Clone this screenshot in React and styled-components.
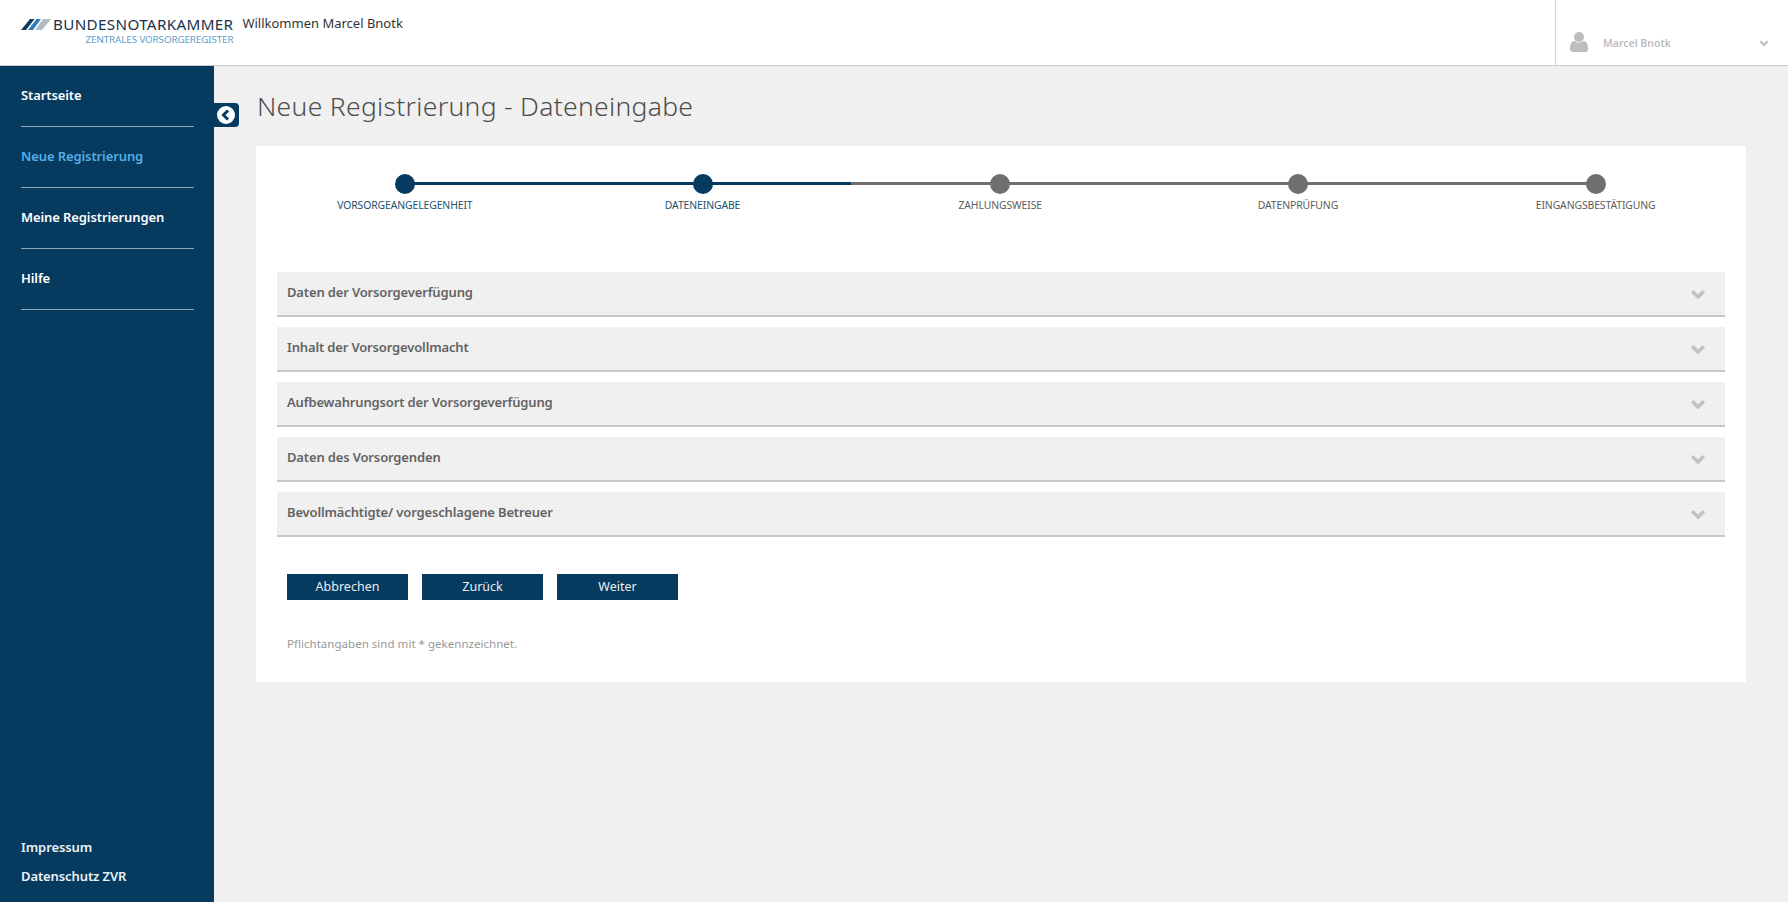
import styled, { createGlobalStyle } from 'styled-components';

const navy = '#063a5e';
const font = '"Noto Sans", "Open Sans", sans-serif';

const GlobalStyle = createGlobalStyle`
html, body {
  margin: 0;
  padding: 0;
  height: 100%;
  background: #f0f0f0;
  font-family: ${font};
}
* { box-sizing: border-box; }
`

const Page = styled.div`
display: flex;
flex-direction: column;
height: 902px;
overflow: hidden;
`

const Header = styled.header`
display: flex;
align-items: stretch;
height: 66px;
flex: none;
background: #fff;
border-bottom: 1px solid #c9c9c9;
`

const Brand = styled.div`
display: flex;
flex-direction: column;
align-items: flex-end;
padding: 14px 0 0 21px;
`

const BrandTop = styled.div`
display: flex;
align-items: center;
gap: 2px;
height: 20px;
`

const BrandName = styled.span`
font-size: 15.2px;
color: #17324d;
letter-spacing: 0.35px;
white-space: nowrap;
`

const BrandSub = styled.span`
font-size: 9.8px;
line-height: 11px;
color: #5f9dc9;
white-space: nowrap;
letter-spacing: -0.1px;
`

const Welcome = styled.div`
margin: 14px 0 0 9px;
font-size: 13px;
line-height: 19px;
color: #333;
white-space: nowrap;
`

const UserBox = styled.div`
display: flex;
align-items: center;
margin-left: auto;
width: 233px;
padding: 19px 19px 0 14px;
border-left: 1px solid #d5d5d5;
`

const UserName = styled.span`
margin: 2px 0 0 15px;
font-size: 10.5px;
font-weight: 600;
color: #bdbdbd;
white-space: nowrap;
`

const UserCaret = styled.span`
display: flex;
margin: 3px 0 0 auto;
`

const Body = styled.div`
display: flex;
flex: 1;
min-height: 0;
`

const Sidebar = styled.nav`
position: relative;
display: flex;
flex-direction: column;
justify-content: space-between;
flex: none;
width: 214px;
padding: 0 20px 0 21px;
background: ${navy};
`

const NavItem = styled.a`
display: block;
height: 61px;
padding-top: 18px;
border-bottom: 1px solid #8ea7b9;
font-size: 13px;
line-height: 22px;
font-weight: 600;
letter-spacing: -0.1px;
color: ${p => (p.$active ? '#55aee6' : '#fff')};
`

const FootLinks = styled.div`
display: flex;
flex-direction: column;
gap: 7px;
padding-bottom: 15px;
`

const FootLink = styled.a`
font-size: 13px;
line-height: 22px;
font-weight: 600;
letter-spacing: -0.1px;
color: #e8f2f8;
`

const Toggle = styled.button`
position: absolute;
top: 37px;
left: 214px;
display: flex;
align-items: center;
justify-content: center;
width: 25px;
height: 24px;
padding: 0 1px 0 0;
border: 0;
border-radius: 0 4px 4px 0;
background: ${navy};
`

const Main = styled.main`
flex: 1;
min-width: 0;
padding: 0 42px 0 42px;
`

const Title = styled.h1`
margin: 0;
padding: 22px 0 0 1px;
height: 80px;
font-size: 26.5px;
line-height: 36px;
font-weight: 300;
letter-spacing: 0.3px;
color: #4d4d4d;
`

const Card = styled.section`
height: 536px;
background: #fff;
padding-top: 28px;
`

const Stepper = styled.div`
display: grid;
grid-template-columns: repeat(5, 1fr);
height: 98px;
padding-right: 1.500px;
`

const Step = styled.div`
position: relative;
display: flex;
flex-direction: column;
align-items: center;
height: 40px;

&::before, &::after {
  content: '';
  position: absolute;
  top: 8px;
  height: 3px;
  width: 50%;
}
&::before {
  left: 0;
  display: ${p => (p.$first ? 'none' : 'block')};
  background: ${p => (p.$done ? navy : '#6f6f6f')};
}
&::after {
  right: 0;
  display: ${p => (p.$last ? 'none' : 'block')};
  background: ${p => (p.$done ? navy : '#6f6f6f')};
}
`

const Dot = styled.span`
position: relative;
z-index: 1;
width: 20px;
height: 20px;
border-radius: 50%;
background: ${p => (p.$done ? navy : '#6f6f6f')};
`

const StepLabel = styled.span`
margin-top: 2px;
font-size: 10.4px;
line-height: 18px;
letter-spacing: -0.1px;
white-space: nowrap;
color: ${p => (p.$done ? '#21506d' : '#5c5c5c')};
`

const Accordion = styled.div`
display: flex;
flex-direction: column;
gap: 10px;
margin: 0 21px 0 21px;
`

const Panel = styled.div`
display: flex;
align-items: center;
justify-content: space-between;
height: 45px;
padding: 0 19px 3px 10px;
background: #f0f0f0;
border-bottom: 2px solid #c8c8c8;
font-size: 13px;
font-weight: 600;
letter-spacing: -0.15px;
color: #636363;
`

const PanelCaret = styled.span`
display: flex;
margin-top: 4px;
`

const Actions = styled.div`
display: flex;
gap: 14px;
margin: 37px 0 0 31px;
`

const Button = styled.button`
width: 121px;
height: 26px;
padding: 0 0 2px;
border: 0;
background: ${navy};
color: #e6eef3;
font-family: ${font};
font-size: 12.5px;
`

const Note = styled.p`
margin: 35px 0 0 31px;
font-size: 11.5px;
line-height: 18px;
letter-spacing: 0.03px;
color: #999;
`

function Chevron({ size = 16, color = '#c2c2c2' }) {
  return (
    <svg width={size} height={size * 0.68} viewBox="0 0 22 15" fill="none">
      <path d="M3 3l8 8 8-8" stroke={color} strokeWidth="5" />
    </svg>
  );
}

function Logo() {
  return (
    <svg width="30" height="11" viewBox="0 0 30 11">
      <path d="M0 11L9 0h4.500L5 11z" fill="#10395f" />
      <path d="M7 11L15.500 0H20l-8 11z" fill="#2e7fb9" />
      <path d="M14 11L22 0h8l-9 11z" fill="#b3bcc3" />
    </svg>
  );
}

function UserIcon() {
  return (
    <svg width="18" height="20" viewBox="0 0 18 20" fill="#bdbdbd">
      <circle cx="9" cy="5" r="5" />
      <path d="M0 17c0-6 2-8 5-8 1 1 2.500 1.500 4 1.500s3-.5 4-1.500c3 0 5 2 5 8 0 2-1 3-3 3H3c-2 0-3-1-3-3z" />
    </svg>
  );
}

function ToggleIcon() {
  return (
    <svg width="18" height="18" viewBox="0 0 18 18">
      <circle cx="9" cy="9" r="9" fill="#fff" />
      <path d="M11 4.500L6.500 9l4.500 4.500" fill="none" stroke={navy} strokeWidth="3" />
    </svg>
  );
}

const navItems = ['Startseite', 'Neue Registrierung', 'Meine Registrierungen', 'Hilfe'];
const steps = [
  { label: 'VORSORGEANGELEGENHEIT', done: true },
  { label: 'DATENEINGABE', done: true },
  { label: 'ZAHLUNGSWEISE' },
  { label: 'DATENPRÜFUNG' },
  { label: 'EINGANGSBESTÄTIGUNG' },
];
const panels = [
  'Daten der Vorsorgeverfügung',
  'Inhalt der Vorsorgevollmacht',
  'Aufbewahrungsort der Vorsorgeverfügung',
  'Daten des Vorsorgenden',
  'Bevollmächtigte/ vorgeschlagene Betreuer',
];

export default function App() {
  return (
    <Page>
      <GlobalStyle />
      <Header>
        <Brand>
          <BrandTop>
            <Logo />
            <BrandName>BUNDESNOTARKAMMER</BrandName>
          </BrandTop>
          <BrandSub>ZENTRALES VORSORGEREGISTER</BrandSub>
        </Brand>
        <Welcome>Willkommen Marcel Bnotk</Welcome>
        <UserBox>
          <UserIcon />
          <UserName>Marcel Bnotk</UserName>
          <UserCaret><Chevron size={10} /></UserCaret>
        </UserBox>
      </Header>
      <Body>
        <Sidebar>
          <div>
            {navItems.map((item) => (
              <NavItem key={item} $active={item === 'Neue Registrierung'}>{item}</NavItem>
            ))}
          </div>
          <FootLinks>
            <FootLink>Impressum</FootLink>
            <FootLink>Datenschutz ZVR</FootLink>
          </FootLinks>
          <Toggle><ToggleIcon /></Toggle>
        </Sidebar>
        <Main>
          <Title>Neue Registrierung - Dateneingabe</Title>
          <Card>
            <Stepper>
              {steps.map((step, i) => (
                <Step key={step.label} $done={step.done} $first={i === 0} $last={i === steps.length - 1}>
                  <Dot $done={step.done} />
                  <StepLabel $done={step.done}>{step.label}</StepLabel>
                </Step>
              ))}
            </Stepper>
            <Accordion>
              {panels.map((panel) => (
                <Panel key={panel}>
                  {panel}
                  <PanelCaret><Chevron /></PanelCaret>
                </Panel>
              ))}
            </Accordion>
            <Actions>
              <Button>Abbrechen</Button>
              <Button>Zurück</Button>
              <Button>Weiter</Button>
            </Actions>
            <Note>Pflichtangaben sind mit * gekennzeichnet.</Note>
          </Card>
        </Main>
      </Body>
    </Page>
  );
}
